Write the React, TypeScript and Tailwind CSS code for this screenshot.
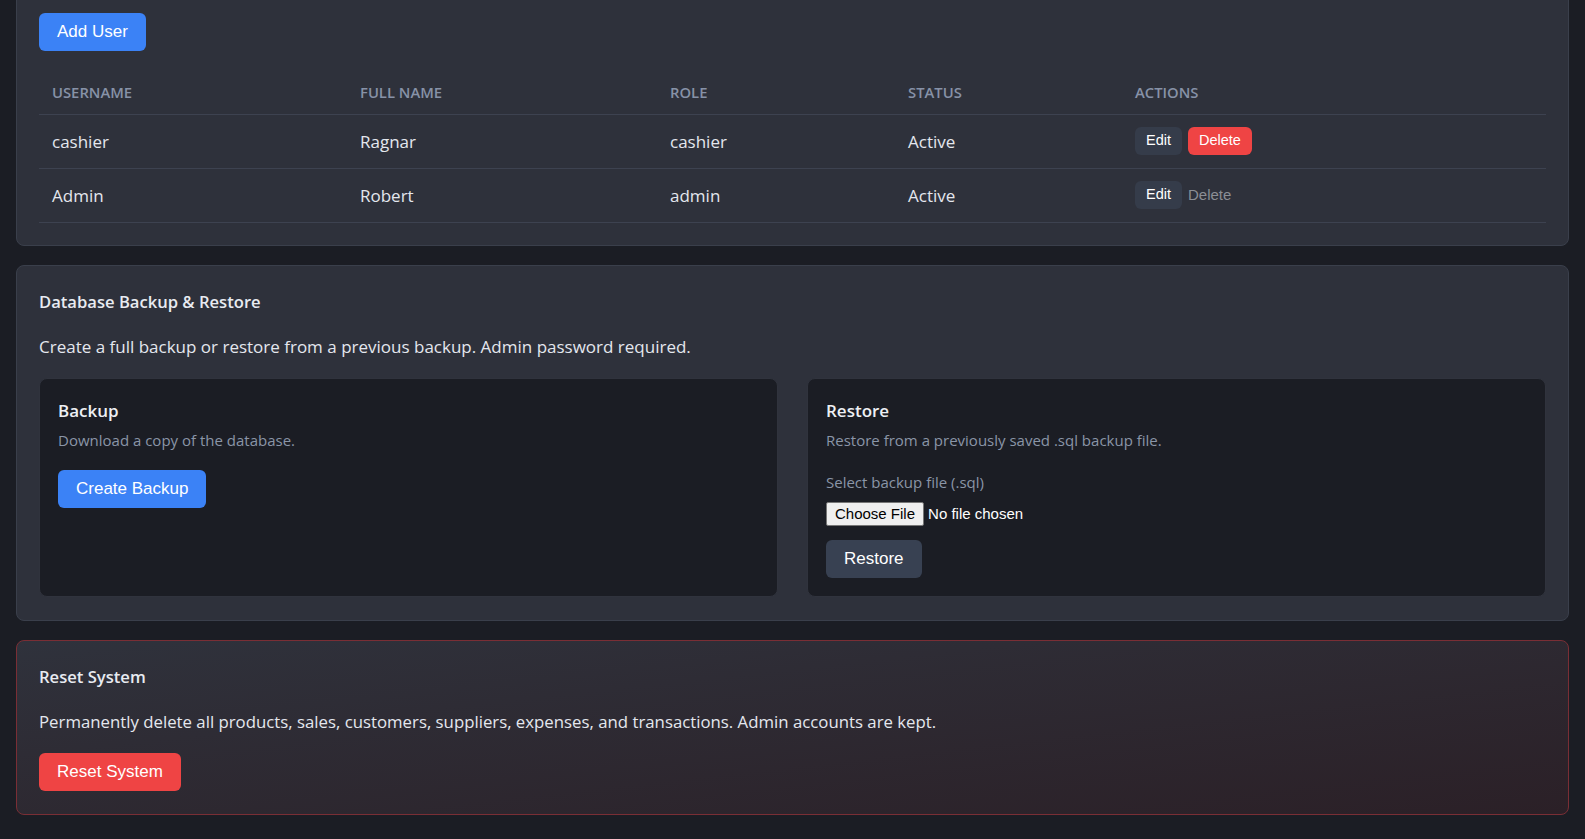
import React from 'react';

const sans = { fontFamily: '"Open Sans", "Noto Sans", sans-serif' };

type User = { username: string; fullName: string; role: string; status: string; canDelete: boolean };

const users: User[] = [
  { username: 'cashier', fullName: 'Ragnar', role: 'cashier', status: 'Active', canDelete: true },
  { username: 'Admin', fullName: 'Robert', role: 'admin', status: 'Active', canDelete: false },
];

const btn = "font-['Liberation_Sans',Arial,sans-serif] text-white rounded-[6px]";

const UsersCard: React.FC = () => (
  <section className="-mt-[10px] rounded-[8px] border border-[#3a3f4b] bg-[#2e313b] px-[22px] pt-[22px] pb-[22px]">
    <button className={`${btn} h-[38px] bg-[#3b82f6] px-[18px] text-[17px]`}>Add User</button>
    <table className="mt-[19px] w-full table-fixed border-collapse text-left">
      <colgroup>
        <col className="w-[308px]" />
        <col className="w-[310px]" />
        <col className="w-[238px]" />
        <col className="w-[227px]" />
        <col />
      </colgroup>
      <thead>
        <tr className="border-b border-[#3d4250]">
          {['Username', 'Full Name', 'Role', 'Status', 'Actions'].map((h) => (
            <th key={h} className="h-[44px] px-[13px] text-[14.8px] font-semibold uppercase text-[#8792a7]">
              {h}
            </th>
          ))}
        </tr>
      </thead>
      <tbody>
        {users.map((u) => (
          <tr key={u.username} className="h-[54px] border-b border-[#3d4250] text-[17px] text-[#e4e7ee]">
            <td className="px-[13px] pt-[1px]">{u.username}</td>
            <td className="px-[13px] pt-[1px]">{u.fullName}</td>
            <td className="px-[13px] pt-[1px]">{u.role}</td>
            <td className="px-[13px] pt-[1px]">{u.status}</td>
            <td className="px-[13px]">
              <div className="flex items-center gap-[6px]">
                <button className={`${btn} h-[28px] bg-[#353c4a] px-[11px] text-[14.5px]`}>Edit</button>
                {u.canDelete ? (
                  <button className={`${btn} h-[28px] bg-[#ef4444] px-[11px] text-[14.5px]`}>Delete</button>
                ) : (
                  <span className="font-['Liberation_Sans',Arial,sans-serif] text-[15px] text-[#8b8e95]">Delete</span>
                )}
              </div>
            </td>
          </tr>
        ))}
      </tbody>
    </table>
  </section>
);

const BackupCard: React.FC = () => (
  <section className="rounded-[8px] border border-[#3a3f4b] bg-[#2e313b] px-[22px] pt-[22px] pb-[23px]">
    <h2 className="text-[16.6px] font-semibold leading-[28px] text-[#e8ebf1]">Database Backup &amp; Restore</h2>
    <p className="mt-[19px] text-[17px] leading-[24px] text-[#e4e7ee]">
      Create a full backup or restore from a previous backup. Admin password required.
    </p>
    <div className="mt-[19px] grid grid-cols-2 gap-[29px]">
      <div className="h-[219px] rounded-[8px] border border-[#30333d] bg-[#1b1d24] p-[18px]">
        <h3 className="text-[17px] font-semibold leading-[28px] text-[#eef0f4]">Backup</h3>
        <p className="mt-[4px] text-[15px] leading-[22px] text-[#8a95a7]">Download a copy of the database.</p>
        <button className={`${btn} mt-[19px] h-[38px] bg-[#3b82f6] px-[18px] text-[17px]`}>Create Backup</button>
      </div>
      <div className="h-[219px] rounded-[8px] border border-[#30333d] bg-[#1b1d24] p-[18px]">
        <h3 className="text-[17px] font-semibold leading-[28px] text-[#eef0f4]">Restore</h3>
        <p className="mt-[4px] text-[15px] leading-[22px] text-[#8a95a7]">Restore from a previously saved .sql backup file.</p>
        <label className="mt-[20px] block text-[15px] leading-[22px] text-[#8a95a7]">Select backup file (.sql)</label>
        <input
          type="file"
          accept=".sql"
          className="mt-[9px] block h-[24px] font-['Liberation_Sans',Arial,sans-serif] text-[15px] text-white file:mr-[4px] file:h-[24px] file:rounded-[2px] file:border file:border-[#767676] file:bg-[#efefef] file:px-[8px] file:text-black"
        />
        <button className={`${btn} mt-[14px] h-[38px] bg-[#384152] px-[18px] text-[17px]`}>Restore</button>
      </div>
    </div>
  </section>
);

const ResetCard: React.FC = () => (
  <section className="rounded-[8px] border border-[#7a2e35] bg-gradient-to-br from-[#2f323c] to-[#2b2027] px-[22px] pt-[22px] pb-[23px]">
    <h2 className="text-[16.6px] font-semibold leading-[28px] text-[#e8ebf1]">Reset System</h2>
    <p className="mt-[19px] text-[16.8px] leading-[24px] text-[#e4e7ee]">
      Permanently delete all products, sales, customers, suppliers, expenses, and transactions. Admin accounts are kept.
    </p>
    <button className={`${btn} mt-[19px] h-[38px] bg-[#ef4444] px-[18px] text-[17px]`}>Reset System</button>
  </section>
);

export default function App() {
  return (
    <div className="h-[839px] overflow-hidden bg-[#1b1d24] px-[16px]" style={sans}>
      <div className="flex flex-col gap-[19px]">
        <UsersCard />
        <BackupCard />
        <ResetCard />
      </div>
    </div>
  );
}
